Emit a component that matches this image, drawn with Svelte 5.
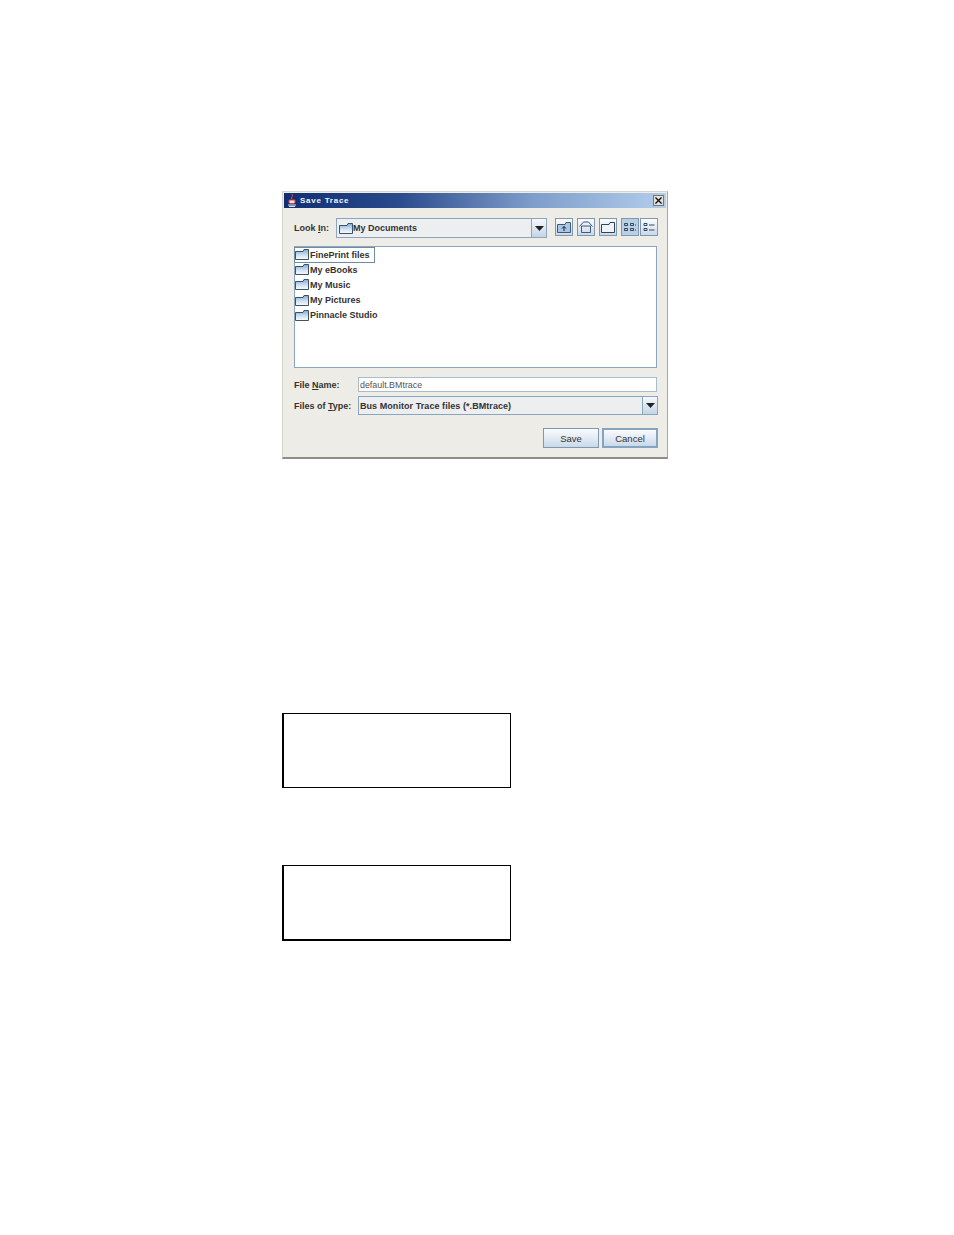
<script>
  const folders = ['FinePrint files', 'My eBooks', 'My Music', 'My Pictures', 'Pinnacle Studio'];
</script>

{#snippet folder()}
  <svg class="folder" viewBox="0 0 14 11" width="14" height="11" aria-hidden="true">
    <defs>
      <linearGradient id="fg" x1="0" y1="0" x2="0" y2="1">
        <stop offset="0" stop-color="#7ea9d6" />
        <stop offset="0.55" stop-color="#cfe0f1" />
        <stop offset="1" stop-color="#fbfdff" />
      </linearGradient>
    </defs>
    <path d="M0.5 2.5 H8 L9 0.5 H13.5 V10.5 H0.5 Z" fill="url(#fg)" stroke="#3d5264" stroke-width="1" />
  </svg>
{/snippet}

{#snippet arrow()}
  <span class="arrow">
    <svg viewBox="0 0 9 5" width="9" height="5" aria-hidden="true"><path d="M0 0 H9 L4.5 5 Z" fill="#222" /></svg>
  </span>
{/snippet}

<main class="page">
  <section class="dialog">
    <header class="title">
      <svg viewBox="0 0 10 13" width="10" height="13" aria-hidden="true">
        <path d="M5 0 C6.5 2 3.5 3 5 5 M2 6 H8 V8.5 C8 10 2 10 2 8.5 Z" stroke="#d33" stroke-width="1" fill="#e9e9f5" />
        <path d="M1 11 H9 M2 12.5 H8" stroke="#e4e4f0" stroke-width="1" />
      </svg>
      <span class="title-text">Save Trace</span>
      <span class="close">
        <svg viewBox="0 0 8 8" width="7" height="7" aria-hidden="true"><path d="M0.5 0.5 L7.5 7.5 M7.5 0.5 L0.5 7.5" stroke="#111" stroke-width="1.5" /></svg>
      </span>
    </header>

    <div class="body">
      <div class="look">
        <span class="look-label">Look <u>I</u>n:</span>
        <div class="combo look-combo">
          <span class="combo-value">{@render folder()}My Documents</span>
          {@render arrow()}
        </div>
        <div class="tools">
          <span class="tool">
            <svg viewBox="0 0 14 11" width="14" height="11" aria-hidden="true"><path d="M0.5 2.5 H8 L9 0.5 H13.5 V10.5 H0.5 Z" fill="#a9c6e4" stroke="#3f5a72" /><path d="M7 9 V4.5 M5 6.5 L7 4.5 L9 6.5" stroke="#123" fill="none" /></svg>
          </span>
          <span class="tool">
            <svg viewBox="0 0 14 12" width="14" height="12" aria-hidden="true"><path d="M2.5 5 V11.5 H11.5 V5 M0.5 5.5 L4.5 1 H9.5 L13.5 5.5 M2.5 5 H11.5" fill="none" stroke="#3f5a72" /></svg>
          </span>
          <span class="tool">
            <svg viewBox="0 0 14 11" width="14" height="11" aria-hidden="true"><path d="M0.5 2.5 H8 L9 0.5 H13.5 V10.5 H0.5 Z" fill="#eef3f8" stroke="#2f4558" /></svg>
          </span>
          <span class="view-group">
            <span class="tool on">
              <svg viewBox="0 0 14 10" width="14" height="10" aria-hidden="true"><path d="M1.5 1.5 H4.5 V3.5 H1.5 Z M7.5 1.5 H10.5 V3.5 H7.5 Z M1.5 6.5 H4.5 V8.5 H1.5 Z M7.5 6.5 H10.5 V8.5 H7.5 Z M12 3 H13 M12 8 H13" fill="none" stroke="#25384a" stroke-width="0.9" /></svg>
            </span>
            <span class="tool joined">
              <svg viewBox="0 0 14 10" width="14" height="10" aria-hidden="true"><path d="M2 1.5 H5 V3.5 H2 Z M2 6.5 H5 V8.5 H2 Z M7 3 H12.5 M7 8 H12.5" fill="none" stroke="#25384a" stroke-width="0.9" /></svg>
            </span>
          </span>
        </div>
      </div>

      <ul class="files">
        {#each folders as name, i}
          <li class="file">
            <span class="entry" class:focus={i === 0}>
              {@render folder()}
              <span class="file-name">{name}</span>
            </span>
          </li>
        {/each}
      </ul>

      <div class="row name-row">
        <span class="label">File <u>N</u>ame:</span>
        <span class="input">default.BMtrace</span>
      </div>
      <div class="row type-row">
        <span class="label">Files of <u>T</u>ype:</span>
        <div class="combo type-combo">
          <span class="combo-value type-value">Bus Monitor Trace files (*.BMtrace)</span>
          {@render arrow()}
        </div>
      </div>

      <div class="actions">
        <span class="btn">Save</span>
        <span class="btn default">Cancel</span>
      </div>
    </div>
  </section>

  <div class="box first"></div>
  <div class="box second"></div>
</main>

<style>
  :global(body) {
    margin: 0;
    background: #fff;
  }
  .page {
    box-sizing: border-box;
    height: 1235px;
    padding: 191px 0 0 282px;
    font-family: "Liberation Sans", Arial, sans-serif;
  }
  .dialog {
    box-sizing: border-box;
    width: 386px;
    height: 268px;
    background: #eeece7;
    border: 1px solid #d6d3cb;
    border-right-color: #a8a69f;
    border-bottom: 2px solid #8e8c86;
    padding: 1px;
    display: flex;
    flex-direction: column;
    color: #333;
  }
  .title {
    height: 15px;
    flex: none;
    display: flex;
    align-items: center;
    gap: 3px;
    padding: 0 2px 0 3px;
    background: linear-gradient(90deg, #0f2f72 0%, #2b4a8c 30%, #7d9ecb 65%, #b3cdea 100%);
  }
  .title-text {
    color: #f2f4fa;
    font-size: 8px;
    font-weight: bold;
    letter-spacing: 0.75px;
  }
  .close {
    margin-left: auto;
    width: 11px;
    height: 11px;
    box-sizing: border-box;
    background: #e4e2dc;
    border: 1px solid #77756f;
    display: flex;
    align-items: center;
    justify-content: center;
  }
  .body {
    flex: 1;
    display: flex;
    flex-direction: column;
    padding: 10px 8px 0 10px;
    font-size: 9px;
    font-weight: bold;
  }
  .look {
    display: flex;
    align-items: center;
    height: 20px;
  }
  .look-label {
    width: 42px;
    flex: none;
  }
  .combo {
    box-sizing: border-box;
    display: flex;
    align-items: stretch;
    background: #edeef0;
    border: 1px solid #8ba5bd;
  }
  .look-combo {
    width: 211px;
    height: 20px;
  }
  .combo-value {
    flex: 1;
    display: flex;
    align-items: center;
    gap: 0;
    padding-left: 2px;
  }
  .type-value {
    padding-left: 1px;
    letter-spacing: 0.06px;
  }
  .arrow {
    width: 14px;
    border-left: 1px solid #8ba5bd;
    background: linear-gradient(#f6f8fb, #c3d5e8);
    display: flex;
    align-items: center;
    justify-content: center;
  }
  .tools {
    display: flex;
    align-self: flex-start;
    margin-left: 8px;
    gap: 4px;
  }
  .view-group {
    display: flex;
  }
  .tool {
    box-sizing: border-box;
    width: 18px;
    height: 18px;
    display: flex;
    align-items: center;
    justify-content: center;
    border: 1px solid #7f98ae;
    background: linear-gradient(#fbfcfd, #c9d9ea);
  }
  .tool.on {
    background: #b9cfe6;
  }
  .tool.joined {
    margin-left: 1px;
  }
  .files {
    box-sizing: border-box;
    list-style: none;
    margin: 8px 0 0;
    padding: 0;
    width: 363px;
    height: 122px;
    background: #fff;
    border: 1px solid #8ba5bd;
  }
  .file {
    height: 15.2px;
    display: flex;
    align-items: center;
  }
  .entry {
    display: flex;
    align-items: center;
    gap: 1px;
    padding-right: 4px;
    height: 14px;
  }
  .entry.focus {
    outline: 1px solid #6f8ba6;
  }
  .row {
    display: flex;
    align-items: center;
  }
  .name-row {
    margin-top: 9px;
    height: 15px;
  }
  .type-row {
    margin-top: 4px;
    height: 19px;
  }
  .label {
    width: 64px;
    flex: none;
  }
  .input {
    box-sizing: border-box;
    width: 299px;
    height: 15px;
    background: #fff;
    border: 1px solid #a9bccd;
    font-weight: normal;
    font-size: 8.9px;
    line-height: 15px;
    padding-left: 1px;
    color: #555;
  }
  .type-combo {
    width: 300px;
    height: 19px;
  }
  .actions {
    display: flex;
    justify-content: flex-end;
    gap: 3px;
    margin-top: 13px;
  }
  .btn {
    box-sizing: border-box;
    width: 56px;
    height: 20px;
    display: flex;
    align-items: center;
    justify-content: center;
    border: 1px solid #7f98ae;
    background: linear-gradient(#fbfcfd, #c9d9ea);
    font-weight: normal;
    font-size: 9.5px;
  }
  .btn.default {
    border-width: 2px;
    border-color: #86a4bf;
  }
  .box {
    box-sizing: border-box;
    width: 229px;
    height: 75px;
    border: 1px solid #000;
    border-left-width: 2px;
    background: #fff;
  }
  .first {
    margin-top: 254px;
  }
  .second {
    margin-top: 77px;
    height: 76px;
    border-bottom-width: 2px;
  }
</style>
